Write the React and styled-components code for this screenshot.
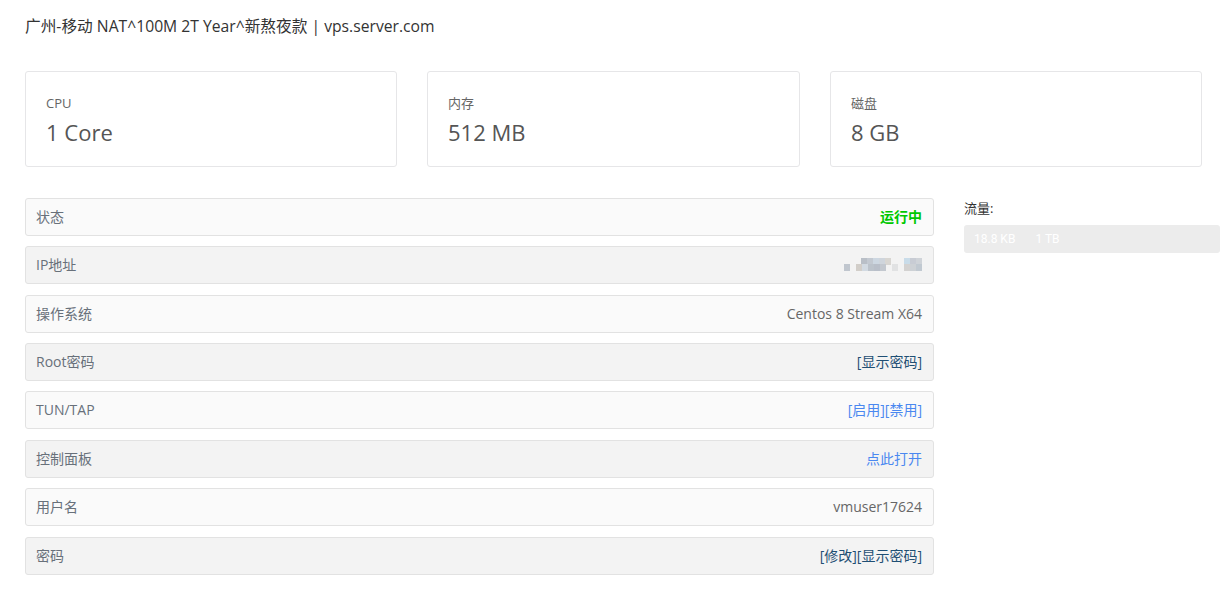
import React from "react";
import styled, { createGlobalStyle } from "styled-components";

const Global = createGlobalStyle`
  html, body { margin: 0; padding: 0; background: #fff; }
  body { font-family: "Open Sans", "Noto Sans CJK SC", sans-serif; color: #333; overflow: hidden; }
  * { box-sizing: border-box; }
`;

const Page = styled.div`
  width: 1220px;
  height: 597px;
  padding: 15px 18px 0 25px;
  overflow: hidden;
`;

const Title = styled.h1`
  margin: 0;
  font-size: 15.7px;
  font-weight: 400;
  line-height: 22px;
  color: #333;
`;

const Cards = styled.div`
  display: grid;
  grid-template-columns: 372px 373px 372px;
  column-gap: 30px;
  margin-top: 34px;
`;

const Card = styled.div`
  height: 96px;
  border: 1px solid #e6e6e8;
  border-radius: 3px;
  padding: 22px 20px 0 20px;
`;

const CardLabel = styled.div`
  font-size: 13px;
  line-height: 18px;
  color: #666;
`;

const CardValue = styled.div`
  margin-top: 4px;
  font-size: 22px;
  line-height: 32px;
  color: #555;
`;

const Lower = styled.div`
  display: grid;
  grid-template-columns: 909px 1fr;
  column-gap: 30px;
  margin-top: 31px;
  margin-right: -18px;
`;

const Rows = styled.div`
  display: flex;
  flex-direction: column;
`;

const Row = styled.div`
  height: 38px;
  margin-bottom: ${(p) => p.$gap}px;
  display: flex;
  align-items: center;
  justify-content: space-between;
  padding: 0 11px 2px 10px;
  border: 1px solid #e2e2e2;
  border-radius: 3px;
  background: ${(p) => (p.$alt ? "#f3f3f3" : "#fafafa")};
  font-size: 14px;
  color: #666;
`;

const Label = styled.span`
  color: #68707a;
`;

const Value = styled.span`
  color: ${(p) =>
    p.$kind === "green" ? "#00c800" : p.$kind === "link" ? "#4a88f0" : p.$kind === "dark" ? "#1f4f74" : "#666"};
  font-weight: ${(p) => (p.$kind === "green" ? 700 : 400)};
`;

const Side = styled.div`
  padding-top: 2px;
`;

const SideTitle = styled.div`
  font-size: 13px;
  line-height: 16px;
  color: #333;
`;

const Bar = styled.div`
  margin-top: 9px;
  height: 28px;
  background: #ececec;
  border-radius: 3px;
  display: flex;
  align-items: center;
  padding-left: 10px;
  gap: 20px;
  font-family: Roboto, "Open Sans", sans-serif;
  font-size: 12px;
  color: #fff;
`;

const Mosaic = () => {
  const cells = [
    [17, 0, "#b9bfc7"], [23, 0, "#c3c9d1"], [29, 0, "#cdd7e1"], [35, 0, "#cfd5dc"], [41, 0, "#d8d6d2"],
    [60, 0, "#c9dce9"], [66, 0, "#c8ccd4"], [72, 0, "#cfd3d8"],
    [0, 6, "#c0c6ce"], [12, 6, "#d2cec9"], [18, 6, "#d2dae2"], [24, 6, "#bcc3cb"], [30, 6, "#b9bfc9"],
    [36, 6, "#c3c8cf"], [48, 6, "#e1e2e3"], [60, 6, "#d3d2d1"], [66, 6, "#cdd1d5"], [72, 6, "#c1c9d1"],
  ];
  return (
    <svg width="78" height="13" viewBox="0 0 78 13" style={{ display: "block" }}>
      {cells.map(([x, y, c], i) => (
        <rect key={i} x={x} y={y} width="6" height="7" fill={c} />
      ))}
    </svg>
  );
};

const rows = [
  ["状态", <Value $kind="green">运行中</Value>],
  ["IP地址", <Mosaic />],
  ["操作系统", <Value>Centos 8 Stream X64</Value>],
  ["Root密码", <Value $kind="dark">[显示密码]</Value>],
  ["TUN/TAP", <Value $kind="link">[启用][禁用]</Value>],
  ["控制面板", <Value $kind="link">点此打开</Value>],
  ["用户名", <Value>vmuser17624</Value>],
  ["密码", <Value $kind="dark">[修改][显示密码]</Value>],
];

const gaps = [10, 11, 10, 10, 11, 10, 11, 0];

export default function App() {
  return (
    <Page>
      <Global />
      <Title>广州-移动 NAT^100M 2T Year^新熬夜款 | vps.server.com</Title>
      <Cards>
        <Card>
          <CardLabel>CPU</CardLabel>
          <CardValue>1 Core</CardValue>
        </Card>
        <Card>
          <CardLabel>内存</CardLabel>
          <CardValue>512 MB</CardValue>
        </Card>
        <Card>
          <CardLabel>磁盘</CardLabel>
          <CardValue>8 GB</CardValue>
        </Card>
      </Cards>
      <Lower>
        <Rows>
          {rows.map(([label, value], i) => (
            <Row key={label} $alt={i % 2 === 1} $gap={gaps[i]}>
              <Label>{label}</Label>
              {value}
            </Row>
          ))}
        </Rows>
        <Side>
          <SideTitle>流量:</SideTitle>
          <Bar>
            <span>18.8 KB</span>
            <span>1 TB</span>
          </Bar>
        </Side>
      </Lower>
    </Page>
  );
}
